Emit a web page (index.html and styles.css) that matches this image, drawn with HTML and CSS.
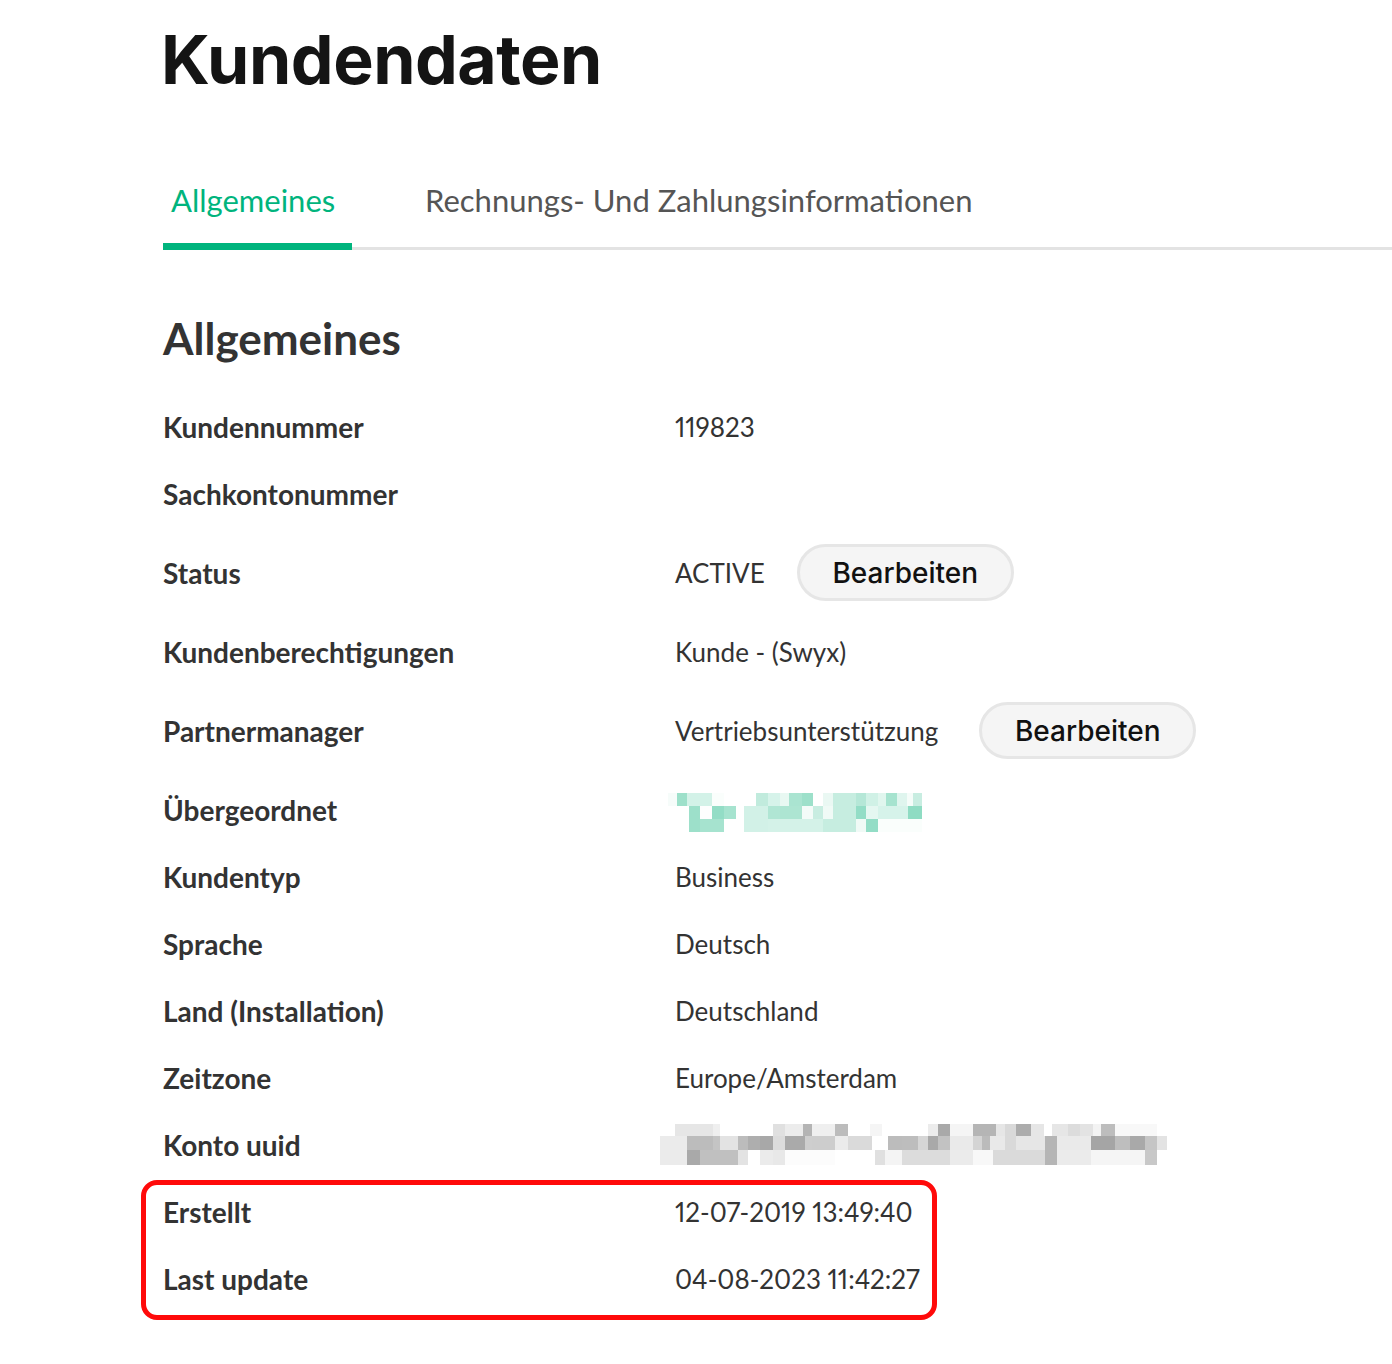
FILE: index.html
```html
<!DOCTYPE html>
<html lang="de">
<head>
    <meta charset="UTF-8">
    <meta name="viewport" content="width=device-width, initial-scale=1.0">
    <title>Kundendaten</title>
    <link rel="stylesheet" href="styles.css">
</head>
<body>
    <div class="page">
        <h1>Kundendaten</h1>

        <!-- Reiter -->
        <div class="tabs">
            <div class="tab active">Allgemeines</div>
            <div class="tab">Rechnungs- Und Zahlungsinformationen</div>
        </div>

        <h2>Allgemeines</h2>

        <div class="details">
            <div class="row">
                <div class="label">Kundennummer</div>
                <div class="value">119823</div>
            </div>
            <div class="row">
                <div class="label">Sachkontonummer</div>
                <div class="value"></div>
            </div>
            <div class="row">
                <div class="label">Status</div>
                <div class="value">ACTIVE <button type="button" class="btn-status">Bearbeiten</button></div>
            </div>
            <div class="row">
                <div class="label">Kundenberechtigungen</div>
                <div class="value">Kunde - (Swyx)</div>
            </div>
            <div class="row">
                <div class="label">Partnermanager</div>
                <div class="value">Vertriebsunterstützung <button type="button">Bearbeiten</button></div>
            </div>
            <div class="row">
                <div class="label">Übergeordnet</div>
                <div class="value">
                    <!-- verpixelt -->
                    <svg class="mosaic mosaic-green" width="260" height="39" viewBox="0 0 260 39">
                        <rect x="0" y="0" width="9" height="13" fill="#f6fcfa"/>
                        <rect x="9" y="0" width="10" height="13" fill="#9de0ca"/>
                        <rect x="19" y="0" width="25" height="13" fill="#d3f2e8"/>
                        <rect x="44" y="0" width="12" height="13" fill="#fafefc"/>
                        <rect x="88" y="0" width="12" height="13" fill="#c1ebdd"/>
                        <rect x="100" y="0" width="12" height="13" fill="#d6f3ea"/>
                        <rect x="112" y="0" width="9" height="13" fill="#e8f8f2"/>
                        <rect x="121" y="0" width="13" height="13" fill="#aae4d1"/>
                        <rect x="134" y="0" width="11" height="13" fill="#9de0ca"/>
                        <rect x="155" y="0" width="10" height="13" fill="#eaf8f3"/>
                        <rect x="165" y="0" width="23" height="13" fill="#c6ede0"/>
                        <rect x="188" y="0" width="10" height="13" fill="#b5e7d7"/>
                        <rect x="198" y="0" width="12" height="13" fill="#d0f1e6"/>
                        <rect x="210" y="0" width="8" height="13" fill="#e0f6ee"/>
                        <rect x="218" y="0" width="11" height="13" fill="#a6e3cf"/>
                        <rect x="229" y="0" width="10" height="13" fill="#dff5ee"/>
                        <rect x="239" y="0" width="6" height="13" fill="#f5fcf9"/>
                        <rect x="245" y="0" width="9" height="13" fill="#c8ede1"/>

                        <rect x="21" y="13" width="11" height="13" fill="#9de0ca"/>
                        <rect x="32" y="13" width="12" height="13" fill="#fdfefe"/>
                        <rect x="44" y="13" width="12" height="13" fill="#93ddc6"/>
                        <rect x="56" y="13" width="12" height="13" fill="#a6e3cf"/>
                        <rect x="76" y="13" width="24" height="13" fill="#d2f1e7"/>
                        <rect x="100" y="13" width="12" height="13" fill="#b0e6d4"/>
                        <rect x="112" y="13" width="22" height="13" fill="#ade5d2"/>
                        <rect x="134" y="13" width="11" height="13" fill="#f3fbf8"/>
                        <rect x="145" y="13" width="10" height="13" fill="#c8ede1"/>
                        <rect x="155" y="13" width="10" height="13" fill="#f0faf6"/>
                        <rect x="165" y="13" width="23" height="13" fill="#c6ede0"/>
                        <rect x="188" y="13" width="10" height="13" fill="#93ddc6"/>
                        <rect x="198" y="13" width="12" height="13" fill="#e5f7f1"/>
                        <rect x="210" y="13" width="30" height="13" fill="#d6f3ea"/>
                        <rect x="240" y="13" width="14" height="13" fill="#8fdcc3"/>

                        <rect x="21" y="26" width="11" height="13" fill="#9de0ca"/>
                        <rect x="32" y="26" width="24" height="13" fill="#a6e3cf"/>
                        <rect x="76" y="26" width="24" height="13" fill="#d2f1e7"/>
                        <rect x="100" y="26" width="55" height="13" fill="#d4f2e8"/>
                        <rect x="155" y="26" width="33" height="13" fill="#c6ede0"/>
                        <rect x="188" y="26" width="10" height="13" fill="#f0faf6"/>
                        <rect x="198" y="26" width="12" height="13" fill="#93ddc6"/>
                        <rect x="210" y="26" width="44" height="13" fill="#fafefc"/>
                    </svg>
                </div>
            </div>
            <div class="row">
                <div class="label">Kundentyp</div>
                <div class="value">Business</div>
            </div>
            <div class="row">
                <div class="label">Sprache</div>
                <div class="value">Deutsch</div>
            </div>
            <div class="row">
                <div class="label">Land (Installation)</div>
                <div class="value">Deutschland</div>
            </div>
            <div class="row">
                <div class="label">Zeitzone</div>
                <div class="value">Europe/Amsterdam</div>
            </div>
            <div class="row">
                <div class="label">Konto uuid</div>
                <div class="value">
                    <svg class="mosaic mosaic-grey" width="507" height="41" viewBox="0 0 507 41">
                        <rect x="15" y="0" width="38" height="12" fill="#e6e6e6"/>
                        <rect x="53" y="0" width="7" height="12" fill="#efefef"/>
                        <rect x="113" y="0" width="12" height="12" fill="#e0e0e0"/>
                        <rect x="125" y="0" width="18" height="12" fill="#ececec"/>
                        <rect x="143" y="0" width="9" height="12" fill="#b4b4b4"/>
                        <rect x="152" y="0" width="23" height="12" fill="#efefef"/>
                        <rect x="175" y="0" width="13" height="12" fill="#bcbcbc"/>
                        <rect x="210" y="0" width="12" height="12" fill="#f5f5f5"/>
                        <rect x="268" y="0" width="10" height="12" fill="#ececec"/>
                        <rect x="278" y="0" width="12" height="12" fill="#a9a9a9"/>
                        <rect x="290" y="0" width="23" height="12" fill="#f5f5f5"/>
                        <rect x="313" y="0" width="23" height="12" fill="#b5b5b5"/>
                        <rect x="336" y="0" width="9" height="12" fill="#e6e6e6"/>
                        <rect x="345" y="0" width="11" height="12" fill="#d9d9d9"/>
                        <rect x="356" y="0" width="15" height="12" fill="#acacac"/>
                        <rect x="371" y="0" width="13" height="12" fill="#e6e6e6"/>
                        <rect x="392" y="0" width="16" height="12" fill="#e6e6e6"/>
                        <rect x="408" y="0" width="12" height="12" fill="#dcdcdc"/>
                        <rect x="420" y="0" width="13" height="12" fill="#e3e3e3"/>
                        <rect x="433" y="0" width="8" height="12" fill="#f3f3f3"/>
                        <rect x="441" y="0" width="14" height="12" fill="#bdbdbd"/>
                        <rect x="455" y="0" width="42" height="12" fill="#f8f8f8"/>

                        <rect x="0" y="12" width="27" height="14" fill="#ebebeb"/>
                        <rect x="27" y="12" width="26" height="14" fill="#bcbcbc"/>
                        <rect x="53" y="12" width="7" height="14" fill="#c4c4c4"/>
                        <rect x="60" y="12" width="18" height="14" fill="#e3e3e3"/>
                        <rect x="78" y="12" width="10" height="14" fill="#bcbcbc"/>
                        <rect x="88" y="12" width="12" height="14" fill="#aeaeae"/>
                        <rect x="100" y="12" width="13" height="14" fill="#a8a8a8"/>
                        <rect x="113" y="12" width="12" height="14" fill="#dcdcdc"/>
                        <rect x="125" y="12" width="20" height="14" fill="#aaaaaa"/>
                        <rect x="145" y="12" width="7" height="14" fill="#cecece"/>
                        <rect x="152" y="12" width="23" height="14" fill="#cdcdcd"/>
                        <rect x="175" y="12" width="13" height="14" fill="#ebebeb"/>
                        <rect x="188" y="12" width="24" height="14" fill="#dadada"/>
                        <rect x="228" y="12" width="14" height="14" fill="#bcbcbc"/>
                        <rect x="242" y="12" width="16" height="14" fill="#bdbdbd"/>
                        <rect x="258" y="12" width="10" height="14" fill="#d6d6d6"/>
                        <rect x="268" y="12" width="10" height="14" fill="#a9a9a9"/>
                        <rect x="278" y="12" width="12" height="14" fill="#c2c2c2"/>
                        <rect x="290" y="12" width="23" height="14" fill="#eaeaea"/>
                        <rect x="313" y="12" width="9" height="14" fill="#d4d4d4"/>
                        <rect x="322" y="12" width="8" height="14" fill="#bbbbbb"/>
                        <rect x="330" y="12" width="15" height="14" fill="#e9e9e9"/>
                        <rect x="345" y="12" width="11" height="14" fill="#d9d9d9"/>
                        <rect x="356" y="12" width="29" height="14" fill="#e6e6e6"/>
                        <rect x="385" y="12" width="12" height="14" fill="#b5b5b5"/>
                        <rect x="397" y="12" width="34" height="14" fill="#eaeaea"/>
                        <rect x="431" y="12" width="24" height="14" fill="#a5a5a5"/>
                        <rect x="455" y="12" width="15" height="14" fill="#bebebe"/>
                        <rect x="470" y="12" width="15" height="14" fill="#a9a9a9"/>
                        <rect x="485" y="12" width="12" height="14" fill="#c5c5c5"/>
                        <rect x="497" y="12" width="10" height="14" fill="#e3e3e3"/>

                        <rect x="0" y="26" width="27" height="15" fill="#ebebeb"/>
                        <rect x="27" y="26" width="13" height="15" fill="#a9a9a9"/>
                        <rect x="40" y="26" width="38" height="15" fill="#c0c0c0"/>
                        <rect x="78" y="26" width="10" height="15" fill="#e3e3e3"/>
                        <rect x="100" y="26" width="13" height="15" fill="#ebebeb"/>
                        <rect x="113" y="26" width="12" height="15" fill="#e8e8e8"/>
                        <rect x="125" y="26" width="50" height="15" fill="#fcfcfc"/>
                        <rect x="215" y="26" width="10" height="15" fill="#e0e0e0"/>
                        <rect x="225" y="26" width="17" height="15" fill="#f4f4f4"/>
                        <rect x="242" y="26" width="48" height="15" fill="#dcdcdc"/>
                        <rect x="290" y="26" width="23" height="15" fill="#ebebeb"/>
                        <rect x="313" y="26" width="20" height="15" fill="#f8f8f8"/>
                        <rect x="333" y="26" width="52" height="15" fill="#dadada"/>
                        <rect x="385" y="26" width="12" height="15" fill="#b5b5b5"/>
                        <rect x="397" y="26" width="34" height="15" fill="#ebebeb"/>
                        <rect x="431" y="26" width="54" height="15" fill="#f5f5f5"/>
                        <rect x="485" y="26" width="12" height="15" fill="#c8c8c8"/>
                    </svg>
                </div>
            </div>

            <!-- markiert -->
            <div class="highlight">
                <div class="row">
                    <div class="label">Erstellt</div>
                    <div class="value">12-07-2019 13:49:40</div>
                </div>
                <div class="row">
                    <div class="label">Last update</div>
                    <div class="value">04-08-2023 11:42:27</div>
                </div>
            </div>
        </div>
    </div>
</body>
</html>
```

FILE: styles.css
```css
body {
    font-family: Lato, "Open Sans", sans-serif;
    background-color: #ffffff;
    color: #333333;
    margin: 0;
    padding: 0;
}

.page {
    padding: 0 0 40px 163px;
}

h1 {
    font-family: Inter, sans-serif;
    font-weight: 700;
    font-size: 68px;
    line-height: 80px;
    color: #141414;
    margin: 19px 0 0 -2px;
    letter-spacing: -0.5px;
}

/* Reiter */
.tabs {
    display: flex;
    margin-top: 81px;
    border-bottom: 3px solid #e3e3e3;
}

.tab {
    font-size: 31px;
    color: #555555;
    padding: 0 8px 23px 8px;
    line-height: 40px;
}

.tab.active {
    color: #00b47d;
    width: 173px;
    border-bottom: 7px solid #00b47d;
    margin-bottom: -3px;
}

.tab + .tab {
    margin-left: 65px;
}

h2 {
    font-size: 44px;
    font-weight: 700;
    color: #333333;
    margin: 63px 0 0 0;
    line-height: 50px;
}

/* Tabelle */
.details {
    margin-top: 30px;
}

.row {
    display: flex;
    align-items: center;
    min-height: 45px;
    padding: 11px 0;
}

.label {
    width: 512px;
    flex-shrink: 0;
    font-weight: 700;
    font-size: 28px;
}

.value {
    display: flex;
    align-items: center;
    font-size: 26px;
    font-variant-numeric: proportional-nums;
}

button {
    font-family: Inter, sans-serif;
    font-size: 28px;
    font-weight: 500;
    color: #111111;
    background-color: #f5f5f5;
    border: 3px solid #e6e6e6;
    border-radius: 30px;
    width: 217px;
    height: 57px;
    margin: 6px 0 6px 41px;
    cursor: pointer;
}

/* ACTIVE ist in Lato breiter */
.btn-status {
    margin-left: 32px;
}

.mosaic {
    display: block;
}

.mosaic-green {
    margin: 3px 0 -3px -7px;
}

.mosaic-grey {
    margin: 0 0 0 -15px;
}

/* rote Markierung */
.highlight {
    position: relative;
}

.highlight::after {
    content: "";
    position: absolute;
    top: 2px;
    bottom: -8px;
    left: -22px;
    width: 786px;
    border: 5px solid #ff0a0a;
    border-radius: 16px;
}
```
